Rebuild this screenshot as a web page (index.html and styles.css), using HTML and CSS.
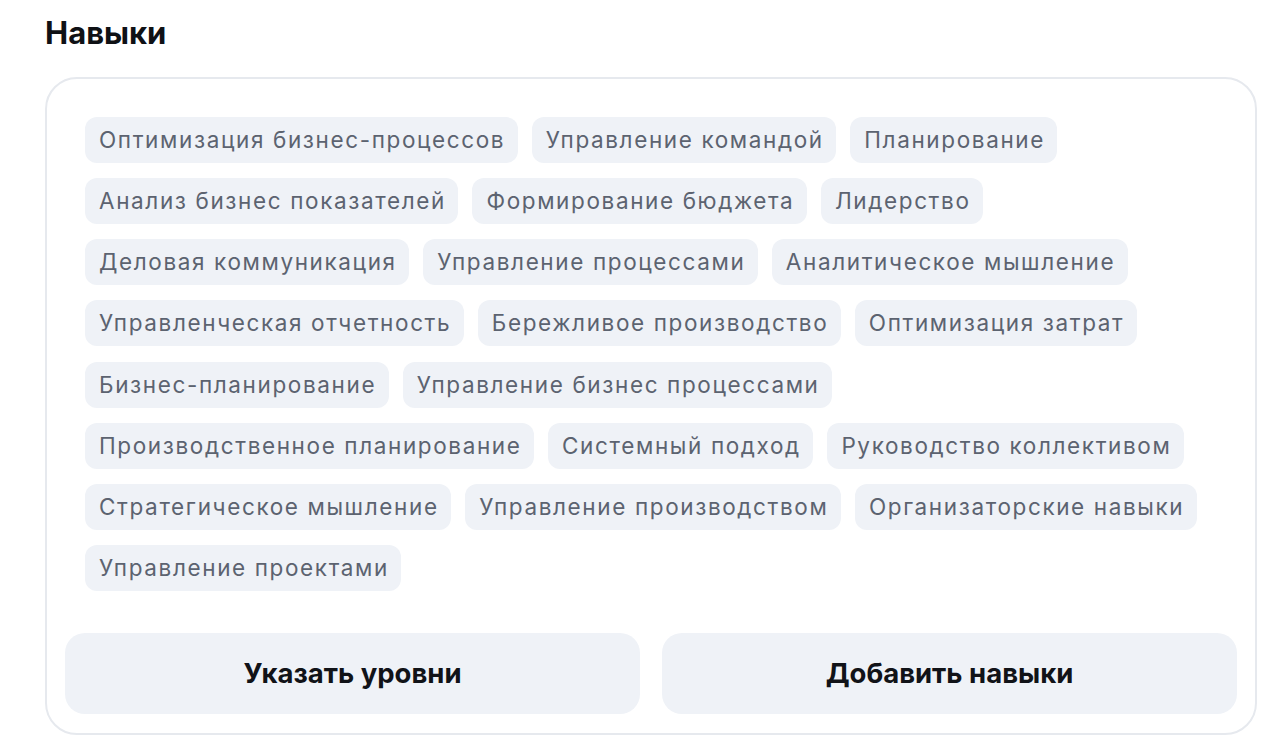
FILE: index.html
```html
<!DOCTYPE html>
<html lang="ru">
<head>
<meta charset="utf-8">
<title>Навыки</title>
<link rel="stylesheet" href="styles.css">
</head>
<body>
<main class="page">
  <h1 class="title">Навыки</h1>
  <section class="card">
    <ul class="tags">
      <li class="tag">Оптимизация бизнес-процессов</li>
      <li class="tag">Управление командой</li>
      <li class="tag">Планирование</li>
      <li class="tag">Анализ бизнес показателей</li>
      <li class="tag">Формирование бюджета</li>
      <li class="tag">Лидерство</li>
      <li class="tag">Деловая коммуникация</li>
      <li class="tag">Управление процессами</li>
      <li class="tag">Аналитическое мышление</li>
      <li class="tag">Управленческая отчетность</li>
      <li class="tag">Бережливое производство</li>
      <li class="tag">Оптимизация затрат</li>
      <li class="tag">Бизнес-планирование</li>
      <li class="tag">Управление бизнес процессами</li>
      <li class="tag">Производственное планирование</li>
      <li class="tag">Системный подход</li>
      <li class="tag">Руководство коллективом</li>
      <li class="tag">Стратегическое мышление</li>
      <li class="tag">Управление производством</li>
      <li class="tag">Организаторские навыки</li>
      <li class="tag">Управление проектами</li>
    </ul>
    <div class="actions">
      <button class="btn" type="button">Указать уровни</button>
      <button class="btn" type="button">Добавить навыки</button>
    </div>
  </section>
</main>
</body>
</html>
```

FILE: styles.css
```css
* { box-sizing: border-box; }
html, body { margin: 0; padding: 0; background: #ffffff; }
body {
  font-family: Inter, "Noto Sans", "Liberation Sans", sans-serif;
  color: #111318;
}
.page {
  padding: 14px 24px 0 45px;
  width: 1280px;
}
.title {
  margin: 0 0 25px 0;
  font-size: 31px;
  font-weight: 700;
  line-height: 38px;
  color: #0f1115;
}
.card {
  width: 1212px;
  border: 2px solid #e6e9ee;
  border-radius: 32px;
  padding: 38px 18px 19px 18px;
}
.tags {
  list-style: none;
  margin: 0;
  padding: 0 20px;
  display: flex;
  flex-wrap: wrap;
  gap: 15.15px 14px;
}
.tag {
  background: #eff2f7;
  color: #5c6370;
  font-size: 22.5px;
  letter-spacing: 1.62px;
  line-height: 46px;
  height: 46px;
  padding: 0 12.5px 0 14px;
  border-radius: 12px;
  white-space: nowrap;
}
.actions {
  margin-top: 42px;
  display: grid;
  grid-template-columns: 1fr 1fr;
  gap: 22px;
}
.btn {
  height: 81px;
  border: none;
  border-radius: 20px;
  background: #eff2f7;
  font-family: Inter, "Noto Sans", "Liberation Sans", sans-serif;
  font-size: 27.5px;
  font-weight: 700;
  color: #111318;
  cursor: pointer;
}
```
